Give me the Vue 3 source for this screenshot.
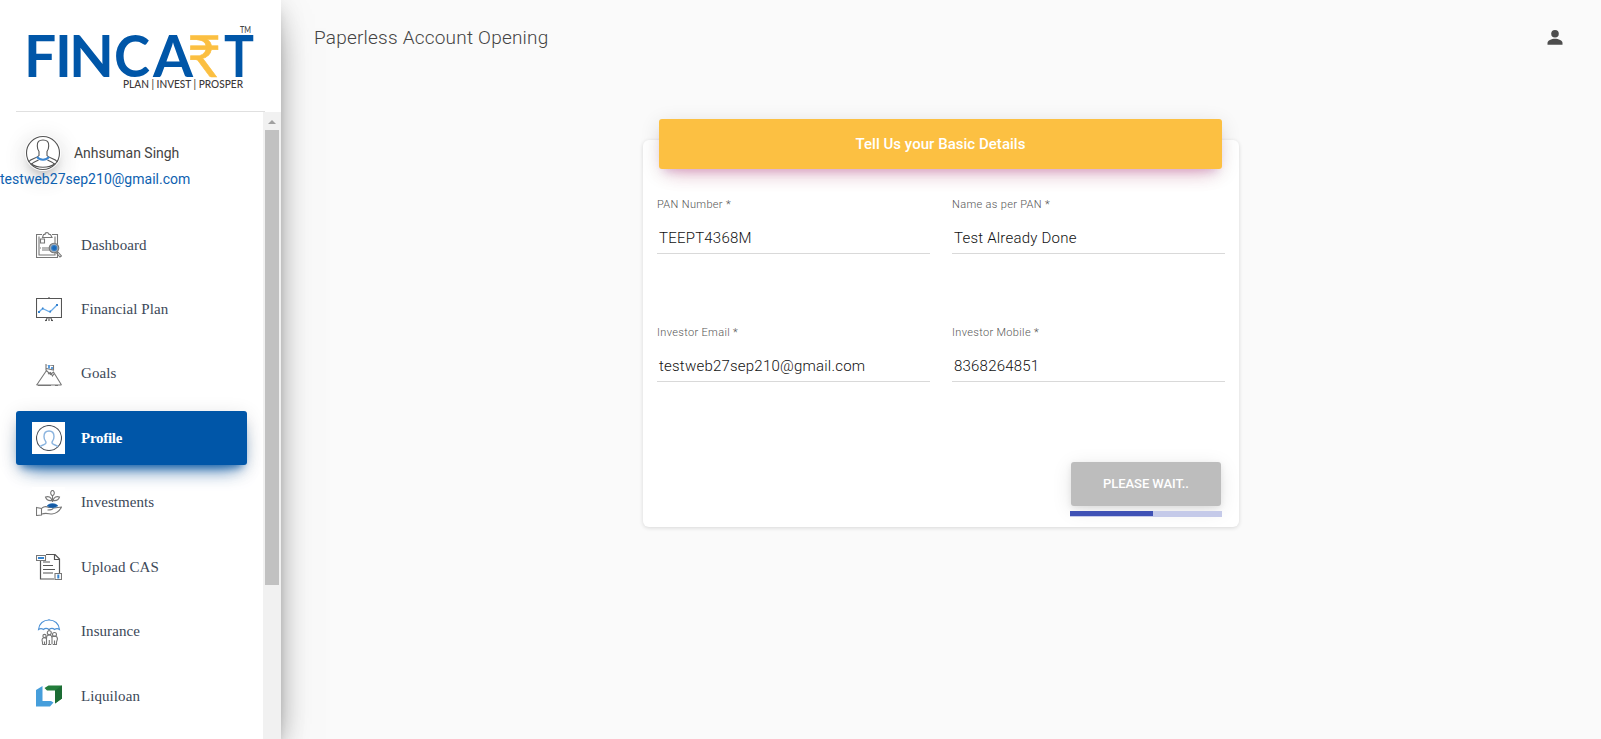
<script setup>
const items = [
  { id: 'dashboard', label: 'Dashboard' },
  { id: 'plan', label: 'Financial Plan' },
  { id: 'goals', label: 'Goals' },
  { id: 'profile', label: 'Profile', active: true },
  { id: 'invest', label: 'Investments' },
  { id: 'cas', label: 'Upload CAS' },
  { id: 'insurance', label: 'Insurance' },
  { id: 'liquiloan', label: 'Liquiloan' },
]
const fields = [
  { id: 'pan', label: 'PAN Number *', value: 'TEEPT4368M' },
  { id: 'name', label: 'Name as per PAN *', value: 'Test Already Done' },
  { id: 'email', label: 'Investor Email *', value: 'testweb27sep210@gmail.com' },
  { id: 'mobile', label: 'Investor Mobile *', value: '8368264851' },
]
const progress = 54.6
</script>

<template>
  <div class="page">
    <aside class="sidebar">
      <div class="brand">
        <svg width="263" height="111" viewBox="0 0 263 111">
          <g class="wordmark" fill="#0056a8">
            <text y="77" font-size="57" x="24">F</text>
            <text y="77" font-size="57" x="55">I</text>
            <text y="77" font-size="57" x="69" textLength="45" lengthAdjust="spacingAndGlyphs">N</text>
            <text y="77" font-size="57" x="114" textLength="36" lengthAdjust="spacingAndGlyphs">C</text>
            <text y="77" font-size="57" x="153" textLength="40" lengthAdjust="spacingAndGlyphs">A</text>
            <text y="77" font-size="57" x="224" textLength="30" lengthAdjust="spacingAndGlyphs">T</text>
          </g>
          <text class="rupee" x="187" y="76.500" font-size="58" textLength="34" lengthAdjust="spacingAndGlyphs" fill="#fbbf41">₹</text>
          <text class="small" x="240" y="33" font-size="9" textLength="11" lengthAdjust="spacingAndGlyphs" fill="#444">TM</text>
          <text class="small" x="123" y="88" font-size="12" textLength="120" lengthAdjust="spacingAndGlyphs" fill="#3d3838">PLAN | INVEST | PROSPER</text>
        </svg>
      </div>
      <div class="scroller">
        <div class="content">
          <div class="user">
            <div class="who">
              <span class="avatar">
                <svg width="36" height="36" viewBox="0 0 36 36" fill="none" stroke="#555" stroke-width="1.100">
                  <circle cx="18" cy="18" r="16.500" />
                  <path d="M18 5c-4 0-6 1.800-5.700 6 0 3 1 4.500 1.700 5.500v4c-2 3-8 2.500-10.500 6.500M18 5c4 0 6 1.800 5.700 6 0 3-1 4.500-1.700 5.500v4c2 3 8 2.500 10.500 6.500M6.500 30c.5-3 5-3.500 7-5M29.500 30c-.5-3-5-3.500-7-5M5.500 28.500c7 5 18 5 25 0" />
                  <path d="M12 22c3 3.500 9 3.500 12 0" stroke="#3c86d0" stroke-width="2" />
                </svg>
              </span>
              <span class="username">Anhsuman Singh</span>
            </div>
            <div class="mail">testweb27sep210@gmail.com</div>
          </div>
          <nav>
            <a v-for="item in items" :key="item.id" class="item" :class="{ active: item.active }">
              <span class="icon">
                <svg width="26" height="26" viewBox="0 0 26 26" fill="none" stroke="#777" stroke-width="1.100">
                  <g v-if="item.id === 'dashboard'">
                    <path d="M6 2.500H.5v23h21V20M16 2.500h5.500V12M3 4.500v18.500h16v-3M19 11V4.500M6.500 5.500h9.500l-1.500-3h-1.500c0-2.500-4-2.500-4 0H7.500zM4.500 7h4v4h-4zM6 16h11M6 18h12M4 16h1" />
                    <circle cx="18" cy="16" r="4.800" fill="#9eabb8" />
                    <circle cx="18.200" cy="16" r="2.500" fill="#1768bb" stroke="#377fc5" />
                    <path d="M21.500 19.500l4 4.500-1.500 1-4-4.500" />
                  </g>
                  <g v-else-if="item.id === 'plan'" transform="translate(0 1)">
                    <path d="M.5 1.500h25v19H.5zM0 1.500h26M13 0v2M13 21v3M9.500 24l2-3.500M16.500 24l-2-3.500M9 23.500h2M15 23.500h2" stroke="#555" />
                    <path d="M3 15l3.500-3.500 7.500 3.500L21 8" stroke="#67aae9" stroke-width="1.300" />
                    <path d="M3 14v2M6 11.500h1.500M13.500 14.500h1.500M21 7v2" stroke="#3682ce" stroke-width="2" />
                  </g>
                  <g v-else-if="item.id === 'goals'">
                    <path d="M.5 24h25M2 22L10.500 9.500l4 4 3-2.500 8 13M2.500 21.500L.5 24M10 9.500V3M10 3.500l7.500 1v4.500l-7-1.500M12 13l2.500-1.500 2 3.500 2-3M2 24.500h13M19 24.500h3" />
                    <path d="M13 4v3.500M15 7h2" stroke="#5b9bdc" stroke-width="2" />
                  </g>
                  <g v-else-if="item.id === 'profile'">
                    <circle cx="13" cy="13" r="12.500" stroke="#4b5058" />
                    <path d="M4 22c1-2.500 6-1.500 6-4.500 0-1.500-2-2-2-6C8 8 9.500 6 13 6s5 2 5 5.500c0 4-2 4.500-2 6 0 3 5 2 6 4.500" stroke="#8bb4df" stroke-width="1.400" />
                  </g>
                  <g v-else-if="item.id === 'invest'">
                    <path d="M.5 17.500l5 1v6.500l-5 .500zM6 18c3-2.500 5-1.500 7-.500h4.500c0 2-3 2.500-6 2.500M18 18l7.500-1c-2 4-5 6.500-9.500 7-3 0-6-1.500-10 0M16.500 12V6.500M16.500 6c-2.500-2-2.500-4 0-6 2.500 2 2.500 4 0 6zM16 10.500c-3 .500-5.500-.500-6.500-3.500 3-1 5.500 0 6.500 3.500zM17 10.500c3 .500 5.500-.500 6.500-3.500-3-1-5.500 0-6.500 3.500z" />
                    <path d="M11 15.800c3-3 8-3 11 0-3 2.500-8 2.500-11 0z" fill="#145aa5" stroke="#2673bd" stroke-width=".5" />
                  </g>
                  <g v-else-if="item.id === 'cas'">
                    <path d="M10 .500h9l4.500 4.500v14M18.500 1v4.500H23M4.500 6.500v18.500H18M7 8h7M7 11.500h10M7 15.500h12M7 19h10" stroke="#555" stroke-width="1.200" />
                    <path d="M.5 1.500h9v5h-9zM19 19.500h6.500v6H19z" />
                    <path d="M2 4h6M22.300 20.500v4" stroke="#3684cf" stroke-width="2" />
                  </g>
                  <g v-else-if="item.id === 'insurance'">
                    <path d="M2.500 10.500C3 4.500 7.500 1 13 1s10 3.500 10.500 9.500c-2-1.500-3-1.500-5 0-1.500-1.500-3.500-1.500-5.500 0-2-1.500-4-1.500-5.500 0-2-1.500-3-1.500-5 0zM13 0v1" stroke="#4e92d6" />
                    <path d="M13 10v2" />
                    <circle cx="13.300" cy="13.800" r="2" /><circle cx="8.500" cy="17" r="1.600" /><circle cx="18.500" cy="15.500" r="2" />
                    <path d="M10.500 25.500V19c0-4 5.500-4 5.500 0v6.500M6.500 25.500v-2L6 21c0-3 4-3 4.500-1M16 19c0-3 5.500-2.500 5.500 1l-1 3v2.500M8.500 25.500v-3M18.500 25.500v-4M13.300 25.500V21M6.500 25.500h4M12 25.500h3M17 25.500h4" />
                  </g>
                  <g v-else stroke="none" transform="translate(0 -.5)">
                    <path d="M0 7.500l6.500-4v15H15l2.500 1.500-3.500 4H0z" fill="#469edb" />
                    <path d="M12.500 3H26v13L19 21V8h-8L8.500 5.500z" fill="#237d3b" />
                    <path d="M26 3v13L19 21V8z" fill="#1c6c34" />
                  </g>
                </svg>
              </span>
              <span class="label">{{ item.label }}</span>
            </a>
          </nav>
        </div>
        <div class="scrollbar"><i class="arrow"></i><i class="thumb"></i></div>
      </div>
    </aside>

    <main class="main">
      <header class="topbar">
        <h1>Paperless Account Opening</h1>
        <svg class="person" width="20" height="20" viewBox="0 0 20 20" fill="#4d4d4d">
          <circle cx="10" cy="5.800" r="3.800" />
          <path d="M2.500 16.800v-1.800c0-2.600 4-4.200 7.500-4.200s7.500 1.600 7.500 4.200v1.800z" />
        </svg>
      </header>
      <section class="card">
        <div class="card-head">Tell Us your Basic Details</div>
        <div class="fields">
          <div v-for="f in fields" :key="f.id" class="field">
            <label>{{ f.label }}</label>
            <div class="value">{{ f.value }}</div>
          </div>
        </div>
        <div class="actions">
          <button>PLEASE WAIT..</button>
          <div class="bar"><div class="fill" :style="{ width: progress + '%' }"></div></div>
        </div>
      </section>
    </main>
  </div>
</template>

<style>
body { background: #fafafa; overflow: hidden; }
</style>

<style scoped>
* { box-sizing: border-box; }
.page { display: flex; width: 1601px; height: 739px; font-family: Roboto, "Liberation Sans", sans-serif; background: #fafafa; overflow: hidden; }
.sidebar { width: 281px; flex: none; display: flex; flex-direction: column; background: #fff; box-shadow: 0 16px 38px -12px rgba(0,0,0,.56), 0 4px 25px rgba(0,0,0,.12), 0 8px 10px -5px rgba(0,0,0,.2); }
.brand { height: 112px; background: linear-gradient(#e0e0e0, #e0e0e0) 16px 111px / 249px 1px no-repeat; }
.brand svg { display: block; overflow: visible; }
.wordmark, .rupee { font-family: Lato, sans-serif; font-weight: 700; }
.rupee { font-weight: 400; stroke: #fbbf41; stroke-width: .6px; }
.small { font-family: Lato, sans-serif; font-weight: 500; }
.scroller { flex: 1; display: flex; min-height: 0; }
.content { width: 263px; overflow: hidden; }
.user { height: 106px; padding-top: 22px; }
.who { display: flex; align-items: center; height: 37px; padding: 1px 0 0 25px; }
.avatar { width: 36px; height: 36px; border-radius: 50%; background: #fff; box-shadow: 0 10px 30px -12px rgba(0,0,0,.42), 0 4px 25px rgba(0,0,0,.12), 0 8px 10px -5px rgba(0,0,0,.2); }
.avatar svg { display: block; }
.username { margin-left: 13px; font-size: 14px; color: #444; letter-spacing: -.03px; }
.mail { margin-top: -2px; line-height: 20px; font-size: 14px; color: #0d61b0; letter-spacing: .02px; white-space: nowrap; }
.item { display: flex; align-items: center; width: 231px; height: 54px; margin: 0 0 10.450px 16px; padding-left: 16px; border-radius: 3px; color: #3c4858; font-family: "Liberation Serif", serif; font-size: 15px; letter-spacing: .07px; }
.icon { width: 33px; height: 32px; display: flex; align-items: center; justify-content: center; background: #fff; margin-right: 16px; }
.active { background: #0056a8; color: #fff; font-weight: 700; letter-spacing: -.28px; box-shadow: 0 12px 20px -10px rgba(0,86,168,.9), 0 4px 20px rgba(0,0,0,.12), 0 7px 8px -5px rgba(0,86,168,.7); }
.scrollbar { width: 18px; background: #f1f1f1; display: flex; flex-direction: column; align-items: center; }
.arrow { border: 4px solid transparent; border-top: 0; border-bottom-color: #a0a0a0; margin: 8px 0 6px; }
.thumb { width: 14px; height: 455px; background: #c1c1c1; }
.main { flex: 1; }
.topbar { height: 75px; display: flex; align-items: center; justify-content: space-between; padding: 0 36px 0 33px; }
h1 { margin: 0; font-size: 19px; font-weight: 300; letter-spacing: .21px; color: #444; }
.card { width: 596px; height: 387px; margin: 65px 0 0 362px; padding: 0 14px; border-radius: 6px; background: #fff; box-shadow: 0 1px 4px rgba(0,0,0,.14); display: flex; flex-direction: column; }
.card-head { height: 50px; flex: none; margin: -21px 3px 0 2px; border-radius: 3px; background: #fcc042; color: #fff; font-size: 15px; font-weight: 500; line-height: 50px; letter-spacing: .03px; text-align: center; box-shadow: 0 12px 20px -10px rgba(233,30,99,.28), 0 4px 20px rgba(0,0,0,.12), 0 7px 8px -5px rgba(156,39,176,.2); }
.fields { display: grid; grid-template-columns: 273px 273px; column-gap: 22px; grid-auto-rows: 128px; padding-top: 27px; }
.field { height: 58px; border-bottom: 1px solid #d9d9d9; }
label { display: block; height: 17px; padding-top: 1px; font-size: 11px; line-height: 16px; font-weight: 300; color: #555; letter-spacing: .34px; }
.value { padding: 15px 0 0 2px; font-size: 15px; line-height: 20px; font-weight: 300; color: #111; letter-spacing: .22px; }
.actions { width: 152px; margin: 10px 3px 0 auto; }
button { display: block; width: 150px; height: 44px; margin: 0 auto 5px; padding: 0 0 2px; border: 0; border-radius: 3px; background: #bdbdbd; color: #fff; font: 500 13px Roboto, sans-serif; letter-spacing: -.07px; box-shadow: 0 4px 20px rgba(0,0,0,.1), 0 2px 6px rgba(0,0,0,.08); }
.bar { height: 6px; background: #c5cae9; }
.fill { height: 5px; background: #3f51b5; }
</style>
